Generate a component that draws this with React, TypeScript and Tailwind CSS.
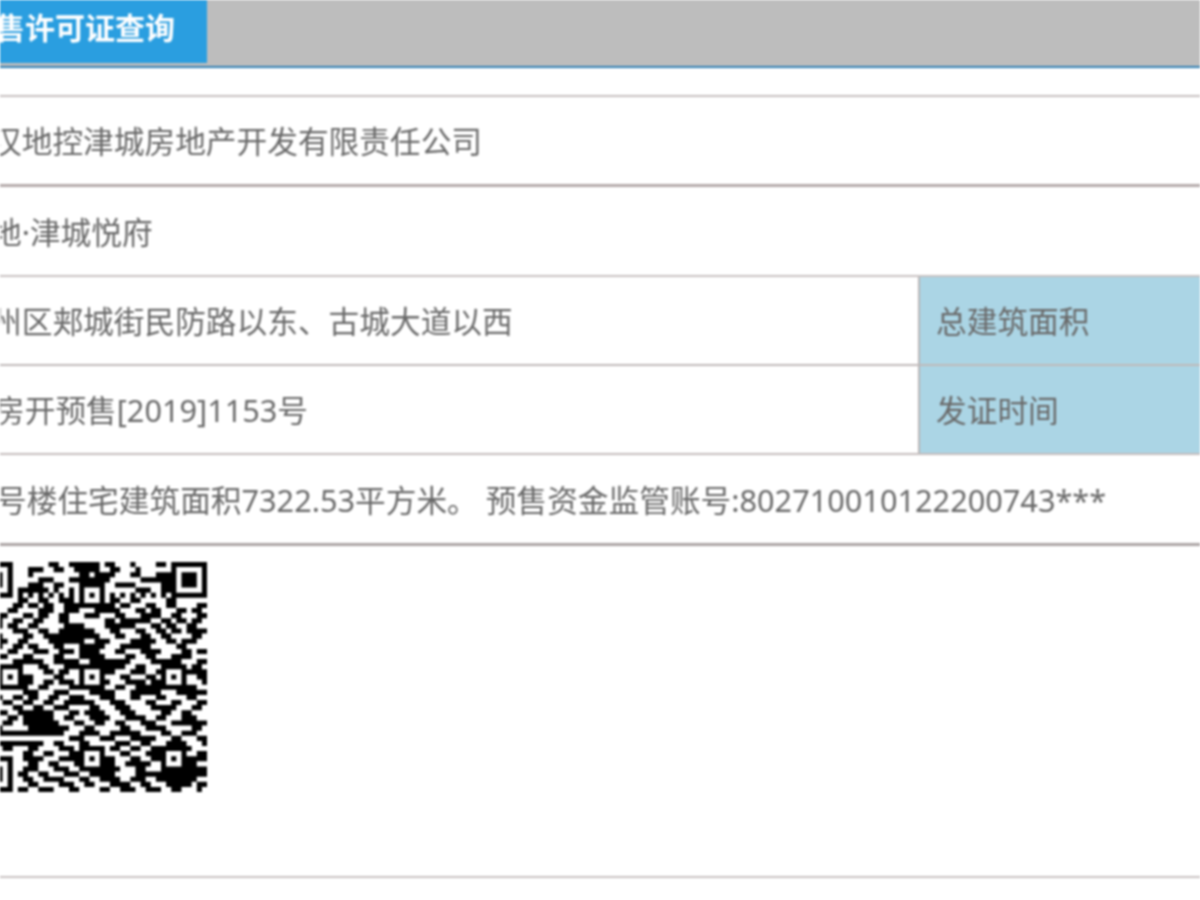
const font = { fontFamily: '"Noto Sans", "Noto Sans CJK SC", sans-serif' };

// QR modules, read off the reference; finder and alignment squares are stamped on top
const qrRows = [
  "000000000000001100111111011000100001100000000",
  "000000000011100110011111001100010000000000000",
  "000000000010000000001101111000110001110000000",
  "000000000000111000111111110000001111110000000",
  "000000000011100110001100000111100000110000000",
  "000000001111110100101000000000011100111000000",
  "101010101010101010101010101010101010101010101",
  "000000001100110011100001101100110000011000000",
  "111100011011011001111110011011000110011000011",
  "001100110000111001110001111100011011000110110",
  "110011000110110011000111000110001111001100011",
  "011110011001100011000000011011111100110110110",
  "000110110011000001111000011111100011011001100",
  "110000011100110011111110001100011001101101111",
  "011110000110011111111111000110001100110000110",
  "000011001100001111111001110000111110011011100",
  "110110011011000110001111100011111100000110000",
  "011000110001110011101111000110001111000011011",
  "000111000110000110001111100001100110001111000",
  "111100011111100111110011111111000011111100011",
  "000011110000110001111001111110011000110000110",
  "110000011000011011001101111000111001100011111",
  "011110001110000110001101100011000110000110011",
  "000111000110011011101101110001111011100110001",
  "110001101100110000110111100110011111100001100",
  "011100000111000111000011111000111111000111111",
  "000110011011001100111000111000110001100001100",
  "111001100110011001111110001110000110001100011",
  "001100011001100111000011000111000011111000110",
  "110011001111111000110111100011100000110011000",
  "001100110111111001100011110001111001100011100",
  "011001100111111100011001100110001110001111111",
  "110110000011111111000110000011000111100000110",
  "000011111111111110001111001111110000110011100",
  "110000000000000000111000111000111110001100011",
  "011111111111100110001100000111001100011110001",
  "000001100011000011100011001100110011000011000",
  "000000000110011000110011100011000111000110011",
  "000000000111100011111000111000110011001111111",
  "000000000011001100011001111001111100111001100",
  "000000000111000111000110011100011000111111111",
  "000000001100110001110011111000011111111111111",
  "000000000110011110001100111100111001111111100",
  "000000000011000011100110001111001100011111011",
  "000000001100111000110000110011100111001100010",
];

function qrPath() {
  const grid = qrRows.map((r) => r.padEnd(45, "0").slice(0, 45).split("").map((c) => c === "1"));
  const stamp = (cx: number, cy: number, rings: boolean[]) => {
    const n = rings.length - 1;
    for (let y = -n; y <= n; y++) {
      for (let x = -n; x <= n; x++) {
        grid[cy + y][cx + x] = rings[Math.max(Math.abs(x), Math.abs(y))];
      }
    }
  };
  const finder = [true, true, false, true];
  const align = [true, false, true];
  stamp(3, 3, finder);
  stamp(41, 3, finder);
  stamp(3, 41, finder);
  [
    [22, 6],
    [6, 22],
    [22, 22],
    [38, 22],
    [22, 38],
    [38, 38],
  ].forEach(([x, y]) => stamp(x, y, align));
  let d = "";
  grid.forEach((row, y) => row.forEach((on, x) => {
    if (on) d += `M${x} ${y}h1v1h-1z`;
  }));
  return d;
}

function QrCode() {
  return (
    <svg viewBox="0 0 45 45" className="-ml-[23px] h-[230px] w-[230px] shrink-0 blur-[0.5px]" aria-label="二维码">
      <path d={qrPath()} fill="#000" />
    </svg>
  );
}

function Line({ className }: { className: string }) {
  return <div className={`w-full shrink-0 ${className}`} />;
}

function Row({
  text,
  height,
  label,
  offset = "-ml-[9px]",
}: {
  text: string;
  height: string;
  label?: string;
  offset?: string;
}) {
  return (
    <div className={`flex w-full shrink-0 ${height}`}>
      <div className="flex min-w-0 flex-1 items-center overflow-hidden pt-[2px]">
        <span className={`whitespace-nowrap ${offset}`}>{text}</span>
      </div>
      {label && (
        <div className="flex w-[282px] shrink-0 items-center border-l-2 border-[#b9b5b5] bg-[#abd5e5] pt-[2px] pl-4">
          {label}
        </div>
      )}
    </div>
  );
}

export default function App() {
  return (
    <div
      className="h-[900px] w-[1200px] overflow-hidden bg-white text-[30.7px] leading-none text-[#696969] blur-[0.8px]"
      style={font}
    >
      {/* 顶部标签栏 */}
      <div className="h-[66px] bg-[#bdbdbd]">
        <div className="flex h-[63px] w-[207px] items-center overflow-hidden bg-[#2a9ee0] pb-[8px] text-[30px] font-bold text-white">
          <span className="-ml-[5px] whitespace-nowrap">售许可证查询</span>
        </div>
      </div>
      <Line className="h-[2px] bg-[#2f7fb3]" />
      <div className="h-[27px]" />
      <Line className="h-[2px] bg-[#c6bfbf]" />
      <Row height="h-[87px]" text="汉地控津城房地产开发有限责任公司" />
      <Line className="h-[3px] bg-[#b5abab]" />
      <Row height="h-[88px]" text="地·津城悦府" />
      <Line className="h-[2px] bg-[#c8c2c2]" />
      <Row height="h-[87px]" text="州区郏城街民防路以东、古城大道以西" label="总建筑面积" />
      <Line className="h-[2px] bg-[#c0b9b9]" />
      <Row height="h-[87px]" offset="-ml-[6px]" text="房开预售[2019]1153号" label="发证时间" />
      <Line className="h-[2px] bg-[#c4bdbd]" />
      <Row
        height="h-[88px]"
        offset="-ml-[4px]"
        text="号楼住宅建筑面积7322.53平方米。 预售资金监管账号:802710010122200743***"
      />
      <Line className="h-[3px] bg-[#aca5a5]" />
      {/* 二维码 */}
      <div className="flex h-[330px] items-start pt-[16px]">
        <QrCode />
      </div>
      <Line className="h-[2px] bg-[#c8c2c2]" />
    </div>
  );
}
